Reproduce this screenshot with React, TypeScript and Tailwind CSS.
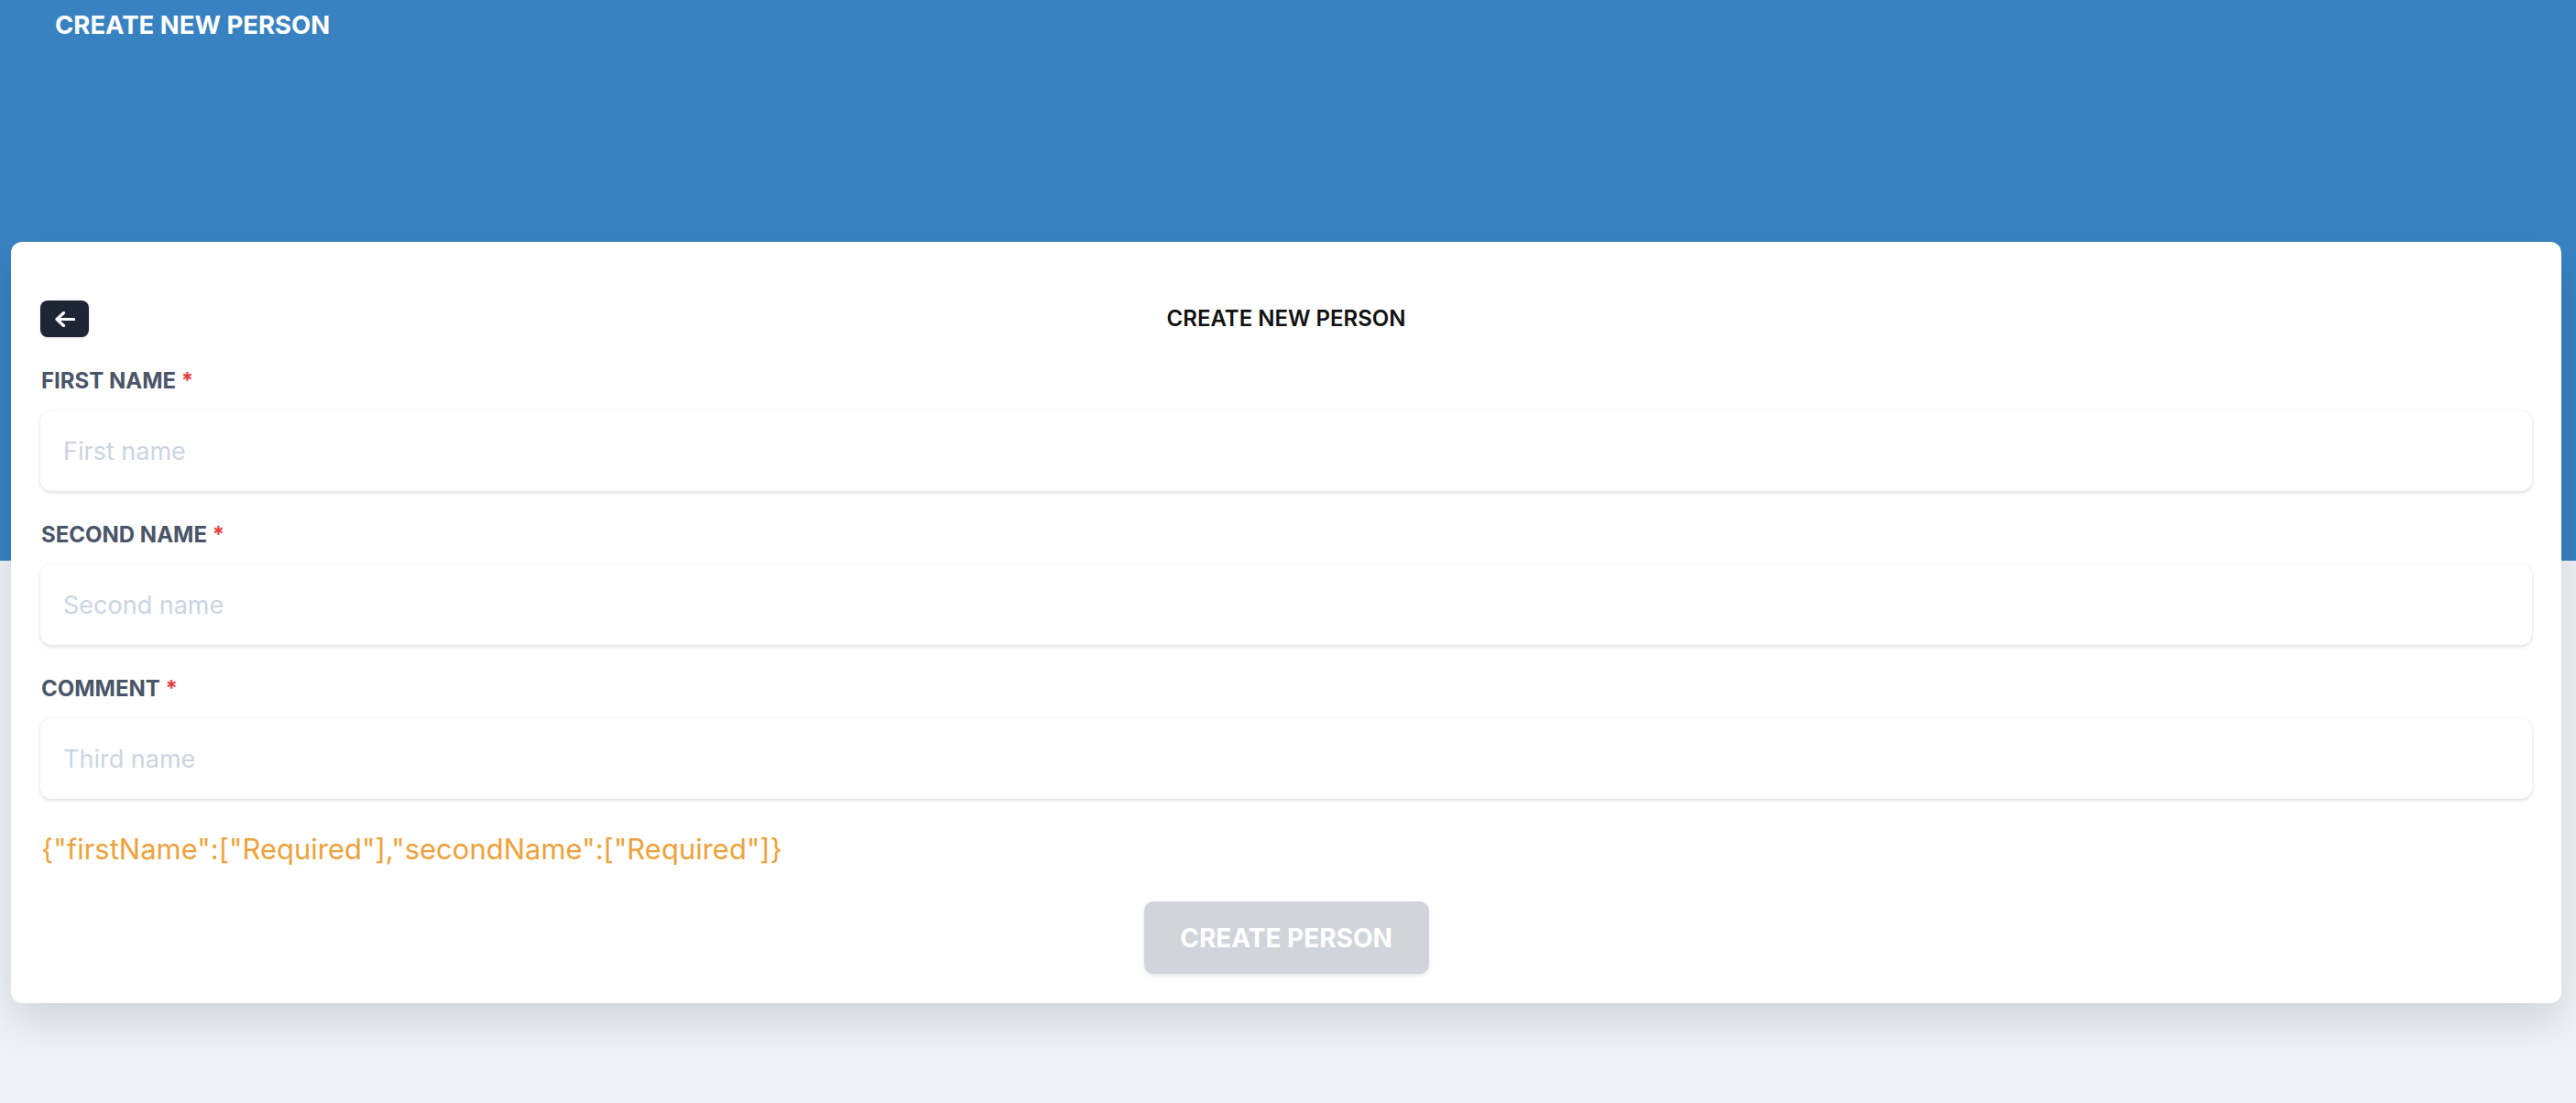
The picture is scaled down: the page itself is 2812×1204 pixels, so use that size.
const fields = [
    { label: "FIRST NAME", placeholder: "First name" },
    { label: "SECOND NAME", placeholder: "Second name" },
    { label: "COMMENT", placeholder: "Third name" },
];

const errors = { firstName: ["Required"], secondName: ["Required"] };

const BackArrow = () => (
    <svg width="22" height="17" viewBox="0 0 22 17" fill="none">
        <path
            d="M20.5 8.5H2M9.5 1.5L2 8.5l7.5 7"
            stroke="white"
            strokeWidth="3.2"
            strokeLinecap="round"
            strokeLinejoin="round"
        />
    </svg>
);

export default function App() {
    return (
        <div className="min-h-screen bg-[linear-gradient(to_bottom,#3982c2_612px,#eff2f7_612px)] font-['Inter',sans-serif]">
            <div className="pl-[60px] pt-[10px] text-[27.5px] leading-[34px] font-bold text-white">
                CREATE NEW PERSON
            </div>

            <div className="ml-3 mr-4 mt-[220px] rounded-xl bg-white px-8 pt-16 pb-8 shadow-[0_20px_45px_rgba(0,0,0,0.13)]">
                <div className="grid grid-cols-[1fr_auto_1fr] items-center">
                    <button className="flex h-10 w-[53px] items-center justify-center rounded-lg bg-[#1e2535] shadow-sm">
                        <BackArrow />
                    </button>
                    <h2 className="text-[24px] leading-[36px] font-semibold text-[#111]">CREATE NEW PERSON</h2>
                    <div />
                </div>

                {fields.map((f) => (
                    <div key={f.label} className="mt-[30px]">
                        <label className="block pl-px text-[24px] leading-[36px] font-bold text-[#4a5568]">
                            {f.label} <span className="text-[#e53e3e]">*</span>
                        </label>
                        <input
                            type="text"
                            placeholder={f.placeholder}
                            className="mt-[14px] block h-[88px] w-full rounded-xl bg-white px-[25px] text-[27px] text-[#1a202c] placeholder:text-[#cbd5e0] shadow-[0_2px_4px_rgba(0,0,0,0.12),0_0_1px_rgba(0,0,0,0.1)] outline-none"
                        />
                    </div>
                ))}

                <div className="mt-[31px] pl-px text-[31px] leading-[48px] text-[#eda23b]">
                    {JSON.stringify(errors)}
                </div>

                <div className="mt-[33px] flex justify-center">
                    <button
                        disabled
                        className="h-[79px] w-[311px] rounded-[10px] bg-[#d1d5db] text-[28px] font-bold text-white shadow-[0_2px_4px_rgba(0,0,0,0.1)]"
                    >
                        CREATE PERSON
                    </button>
                </div>
            </div>
        </div>
    );
}
